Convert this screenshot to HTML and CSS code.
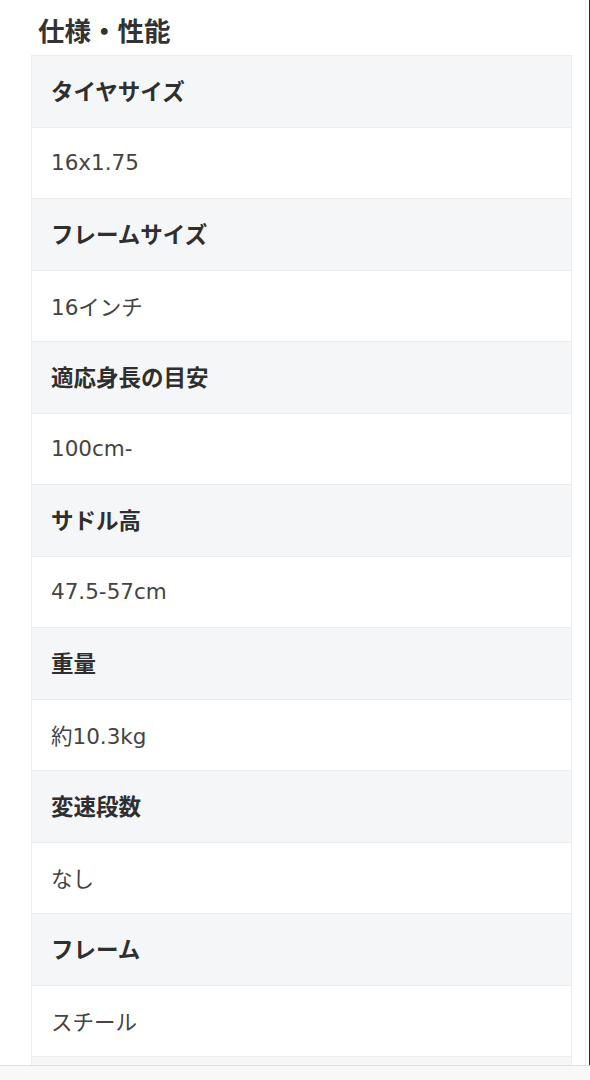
FILE: index.html
```html
<!DOCTYPE html>
<html lang="ja">
  <head>
    <meta charset="UTF-8" />
    <meta name="viewport" content="width=device-width, initial-scale=1.0" />
    <title>仕様・性能</title>
    <link rel="stylesheet" href="styles.css">
  </head>

  <body>
    <div class="frame">
      <div class="inner">
        <h2 class="spec-title">仕様・性能</h2>
        <dl class="spec">
          <dt>タイヤサイズ</dt>
          <dd>16x1.75</dd>
          <dt>フレームサイズ</dt>
          <dd>16インチ</dd>
          <dt>適応身長の目安</dt>
          <dd>100cm-</dd>
          <dt>サドル高</dt>
          <dd>47.5-57cm</dd>
          <dt>重量</dt>
          <dd>約10.3kg</dd>
          <dt>変速段数</dt>
          <dd>なし</dd>
          <dt>フレーム</dt>
          <dd>スチール</dd>
        </dl>
        <div class="spec-more"></div>
      </div>
    </div>
    <div class="bottom-bar"></div>
  </body>
</html>
```

FILE: styles.css
```css
* { box-sizing: border-box; }
html, body { margin: 0; padding: 0; background: #fff; }
body { font-family: "Noto Sans CJK JP", "Noto Sans", sans-serif; color: #333; }

.frame { width: 590px; border-right: 1px solid #2d2d2d; }
.inner { width: 586px; border-right: 1px solid #efefef; padding: 10px 13px 0 31px; }

.spec-title { margin: 0 0 6px 7px; font-size: 26.5px; line-height: 39px; font-weight: 700; color: #333; }

.spec { margin: 0; border: 1px solid #ececec; border-bottom: none; }
.spec dt,
.spec dd { margin: 0; height: 71.5px; display: flex; align-items: center; padding: 0 0 3px 19px; border-bottom: 1px solid #ececec; }
.spec dt { background: #f5f6f8; font-weight: 700; font-size: 22.5px; color: #2f2f2f; }
.spec dd { background: #fff; font-family: "DejaVu Sans", "Noto Sans CJK JP", sans-serif; font-weight: 400; font-size: 21.5px; color: #444; padding-bottom: 1px; }

.spec-more { height: 20px; background: #f5f6f8; border: 1px solid #ececec; border-top: none; }

.bottom-bar { position: fixed; left: 0; right: 0; bottom: 0; height: 15px; background: #f8f8f8; border-top: 1px solid #e0e0e0; }
```
